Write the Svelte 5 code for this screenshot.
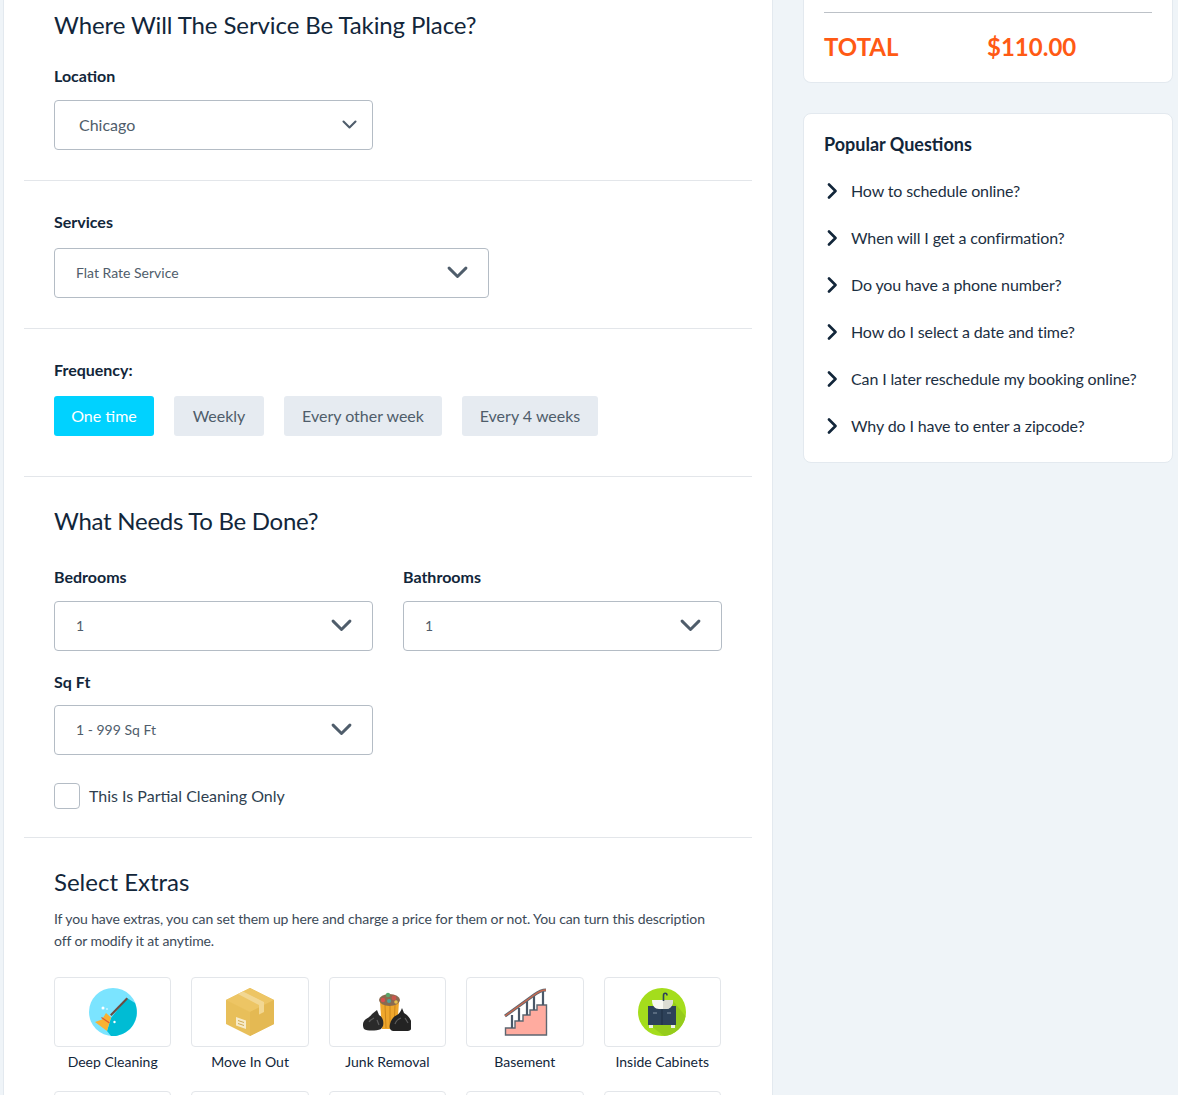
<script>
	const frequencies = [
		{ label: 'One time', width: 100 },
		{ label: 'Weekly', width: 90 },
		{ label: 'Every other week', width: 158 },
		{ label: 'Every 4 weeks', width: 136 }
	];
	const extras = ['Deep Cleaning', 'Move In Out', 'Junk Removal', 'Basement', 'Inside Cabinets'];
	const questions = [
		'How to schedule online?',
		'When will I get a confirmation?',
		'Do you have a phone number?',
		'How do I select a date and time?',
		'Can I later reschedule my booking online?',
		'Why do I have to enter a zipcode?'
	];
	let frequency = $state('One time');
	let partial = $state(false);
</script>

{#snippet chevron(size)}
	<svg class="chev" width={size} height={size * 0.6} viewBox="0 0 20 12" fill="none">
		<path d="M2 2l8 8 8-8" stroke="#4f5d6b" stroke-width="2.800" stroke-linecap="round" stroke-linejoin="round" />
	</svg>
{/snippet}

{#snippet select(text, width)}
	<div class="select" style="width: {width}px">
		<span>{text}</span>
		{@render chevron(21)}
	</div>
{/snippet}

{#snippet icon(name)}
	<svg width="48" height="48" viewBox="0 0 48 48">
		{#if name === 'Deep Cleaning'}
			<circle cx="24" cy="24" r="24" fill="#7be4ff" />
			<path d="M38 10L46 15A24 24 0 0 1 22 48L18 43L22 30z" fill="#00bcd4" />
			<path d="M37.500 9.500l1.500 1.500L22.500 28l-1.500-1.500z" fill="#6d4c41" />
			<path d="M17 25l5 4.500-1.500 5L18 43l-6-4.500L6 34l7-2.500z" fill="#f9b233" />
			<path d="M12.500 29.500l8 5.500" stroke="#e2582b" stroke-width="1.200" />
			<circle cx="14" cy="20" r="1.500" fill="#fff" />
			<circle cx="25.500" cy="34" r="1.200" fill="#fff" />
			<circle cx="18" cy="21" r="0.800" fill="#fff" />
		{:else if name === 'Move In Out'}
			<path d="M24 0l24 12v24L24 48 0 36V12z" fill="#e8bf5a" />
			<path d="M24 0l24 12-24 12L0 12z" fill="#edc564" />
			<path d="M24 24l24-12v24L24 48z" fill="#e4b953" />
			<path d="M12 6l5-2.500L38 14v10l-5 2.500V17z" fill="#f2d792" />
			<path d="M10 29l10 3.500V41l-10-3.500z" fill="#f7ebc9" />
			<path d="M12 32.500l6 2M12 35.500l6 2" stroke="#c9a347" stroke-width="0.900" />
		{:else if name === 'Junk Removal'}
			<path d="M17 14h19l-2 27H19z" fill="#efa72c" />
			<path d="M22 17l1 23M27 17v23M32 17l-1 23" stroke="#cc861a" stroke-width="1" />
			<ellipse cx="26.500" cy="12" rx="10.500" ry="6" fill="#8a6a50" />
			<circle cx="20" cy="12" r="2.200" fill="#d94f4f" />
			<circle cx="25" cy="7" r="2.200" fill="#5aa469" />
			<circle cx="31" cy="10" r="2.400" fill="#c9564c" />
			<circle cx="26" cy="13" r="2" fill="#4fa09a" />
			<circle cx="33" cy="14" r="1.800" fill="#e7c04c" />
			<path d="M14 22l2 5c4 2 5 7 4 11l-2 3c-5 2-14 2-17 0-2-4-1-8 2-10 3-2 5-3 6-5z" fill="#2a2a2a" />
			<path d="M6 34c1-2 3-3 5-4M14 32l2 5" stroke="#5c5c5c" stroke-width="1.200" fill="none" />
			<path d="M39 20l2 5c4 2 8 7 8 13 0 3-2 5-4 5H30c-3-1-4-3-3-7 1-4 3-7 7-9 2-1 4-4 5-7z" fill="#232323" />
			<path d="M32 36c1-3 3-5 6-6M42 30l3 5" stroke="#5c5c5c" stroke-width="1.200" fill="none" />
		{:else if name === 'Basement'}
			<path d="M4.500 47v-7H14v-7h8v-6h7v-5h7v-5h9.500v30z" fill="#ffab9f" stroke="#5d6670" stroke-width="1.400" />
			<path d="M11 27v13M18 20v13M26 13v14M33 7v15M42 3v14" stroke="#4a5868" stroke-width="2.200" />
			<path d="M4 28L33 7c4-3 7-5 12-5" fill="none" stroke="#5d6670" stroke-width="3" />
			<path d="M4 28L33 7c4-3 7-5 12-5" fill="none" stroke="#c9694f" stroke-width="1.400" />
		{:else}
			<circle cx="24" cy="24" r="24" fill="#a4dd1c" />
			<path d="M35 13L47.500 28A24 24 0 0 1 26 48L13 38z" fill="#95cc1b" />
			<path d="M10 18h28v19H10z" fill="#2d4159" />
			<path d="M24 18v19" stroke="#1f2f42" stroke-width="1" />
			<path d="M15 25h4M29 25h4" stroke="#8595a6" stroke-width="1" />
			<path d="M11 37h4v3h-4zM33 37h4v3h-4z" fill="#eef3e6" />
			<path d="M14 12h21c0 6-3 9-7 9h-7c-4 0-7-3-7-9z" fill="#f7f7f2" />
			<path d="M25 12h10c0 6-3 9-7 9h-3z" fill="#dcdcd4" />
			<path d="M25.500 13V7.500c0-3 3.500-3 3.500 0" fill="none" stroke="#2d4159" stroke-width="1.600" />
		{/if}
	</svg>
{/snippet}

<div class="page">
	<main class="panel">
		<section class="first">
			<h2 class="where">Where Will The Service Be Taking Place?</h2>
			<div class="label">Location</div>
			<div class="select location">
				<span>Chicago</span>
				{@render chevron(15)}
			</div>
		</section>

		<section class="services">
			<div class="label">Services</div>
			{@render select('Flat Rate Service', 435)}
		</section>

		<section class="freq">
			<div class="label">Frequency:</div>
			<div class="freq-row">
				{#each frequencies as f}
					<button style="width: {f.width}px" class:active={frequency === f.label} onclick={() => (frequency = f.label)}>{f.label}</button>
				{/each}
			</div>
		</section>

		<section class="todo">
			<h2 class="what">What Needs To Be Done?</h2>
			<div class="two">
				<div>
					<div class="label">Bedrooms</div>
					{@render select('1', 319)}
				</div>
				<div>
					<div class="label">Bathrooms</div>
					{@render select('1', 319)}
				</div>
			</div>
			<div class="label sq">Sq Ft</div>
			{@render select('1 - 999 Sq Ft', 319)}
			<label class="check">
				<input type="checkbox" bind:checked={partial} />
				<span>This Is Partial Cleaning Only</span>
			</label>
		</section>

		<section class="extras">
			<h2>Select Extras</h2>
			<p>If you have extras, you can set them up here and charge a price for them or not. You can turn this description off or modify it at anytime.</p>
			<div class="tiles">
				{#each extras as e}
					<div class="tile">
						<div class="tile-box">{@render icon(e)}</div>
						<div class="tile-name">{e}</div>
					</div>
				{/each}
				{#each extras as e}
					<div class="tile"><div class="tile-box"></div></div>
				{/each}
			</div>
		</section>
	</main>

	<aside>
		<div class="card total-card">
			<div class="total">
				<span>TOTAL</span>
				<span>$110.00</span>
			</div>
		</div>
		<div class="card faq">
			<h3>Popular Questions</h3>
			<ul>
				{#each questions as q}
					<li>
						<svg width="10" height="16" viewBox="0 0 10 16" fill="none">
							<path d="M2 1.500L8.500 8 2 14.500" stroke="#12263a" stroke-width="2.600" stroke-linecap="round" stroke-linejoin="round" />
						</svg>
						<span>{q}</span>
					</li>
				{/each}
			</ul>
		</div>
	</aside>
</div>

<style>
	:global(body) { background: #eff4f8; }
	.page {
		display: flex;
		align-items: flex-start;
		height: 1095px;
		overflow: hidden;
		font-family: Lato, sans-serif;
		color: #12263a;
	}
	.panel {
		width: 770px;
		box-sizing: border-box;
		margin-left: 3px;
		padding: 0 20px;
		background: #fff;
		border-left: 1px solid #e3e9ef;
		border-right: 1px solid #e3e9ef;
		flex: none;
	}
	section { padding: 0 30px; border-bottom: 1px solid #e3e6ea; }
	.first { height: 181px; box-sizing: border-box; padding-top: 10px; }
	.services { height: 148px; box-sizing: border-box; padding-top: 31px; }
	.freq { height: 148px; box-sizing: border-box; padding-top: 31px; }
	.todo { height: 361px; box-sizing: border-box; padding-top: 29px; }
	.extras { border: none; padding-top: 29px; }
	h2 { margin: 0; font-size: 24px; line-height: 30px; font-weight: 400; }
	h2.where { letter-spacing: -0.1px; }
	h2.what { letter-spacing: -0.27px; }
	.label { font-size: 16px; font-weight: 700; line-height: 20px; }
	.first .label { margin-top: 26px; margin-bottom: 14px; }
	.services .label, .freq .label { margin-bottom: 16px; }
	.select {
		display: flex;
		align-items: center;
		justify-content: space-between;
		box-sizing: border-box;
		height: 50px;
		padding: 0 20px 2px 21px;
		border: 1px solid #b4bcc5;
		border-radius: 4px;
		font-size: 14px;
		color: #4f5d6b;
		background: #fff;
	}
	.location { width: 319px; padding: 0 15px 2px 24px; font-size: 16px; }
	.chev { display: block; }
	.freq-row { display: flex; gap: 20px; }
	button {
		height: 40px;
		padding: 0 0 2px;
		border: none;
		border-radius: 3px;
		background: #e6ebf1;
		color: #4f5d6b;
		font: 400 16px Lato, sans-serif;
	}
	button.active { background: #00d2ff; color: #fff; }
	.two { display: flex; gap: 30px; margin-top: 31px; }
	.two .label { margin-bottom: 14px; }
	.label.sq { margin-top: 21px; margin-bottom: 13px; }
	.check { display: flex; align-items: center; gap: 9px; margin-top: 28px; font-size: 16px; color: #2f3f50; }
	.check span { padding-bottom: 2px; }
	.check input {
		appearance: none;
		width: 26px;
		height: 26px;
		margin: 0;
		border: 1px solid #b4bcc5;
		border-radius: 4px;
		background: #fff;
	}
	.check input:checked { background: #00d2ff; }
	p { margin: 11px 0 25px; font-size: 14px; line-height: 22px; color: #3c4a58; letter-spacing: -0.11px; }
	.tiles { display: grid; grid-template-columns: repeat(5, 117.400px); column-gap: 20px; row-gap: 20px; }
	.tile-box {
		display: flex;
		align-items: center;
		justify-content: center;
		height: 70px;
		box-sizing: border-box;
		border: 1px solid #e3e6ea;
		border-radius: 4px;
	}
	.tile-name { margin-top: 6px; text-align: center; font-size: 14px; line-height: 18px; }
	aside { width: 370px; margin-left: 30px; flex: none; }
	.card { background: #fff; border: 1px solid #e3e9ef; border-radius: 8px; box-sizing: border-box; }
	.total-card { height: 83px; padding: 12px 20px 0; border-top: none; border-top-left-radius: 0; border-top-right-radius: 0; }
	.total {
		display: grid;
		grid-template-columns: 163px auto;
		border-top: 1px solid #bcc1c7;
		padding-top: 18px;
		font-size: 24px;
		line-height: 32px;
		font-weight: 700;
		color: #ff5a14;
	}
	.faq { margin-top: 30px; height: 350px; padding: 19px 20px; }
	h3 { margin: 0; font-size: 18px; line-height: 22px; font-weight: 700; }
	ul { list-style: none; margin: 12px 0 0; padding: 0; }
	li { display: flex; align-items: center; gap: 14px; height: 47px; padding-left: 3px; font-size: 16px; color: #1c2f42; letter-spacing: -0.13px; }
</style>
